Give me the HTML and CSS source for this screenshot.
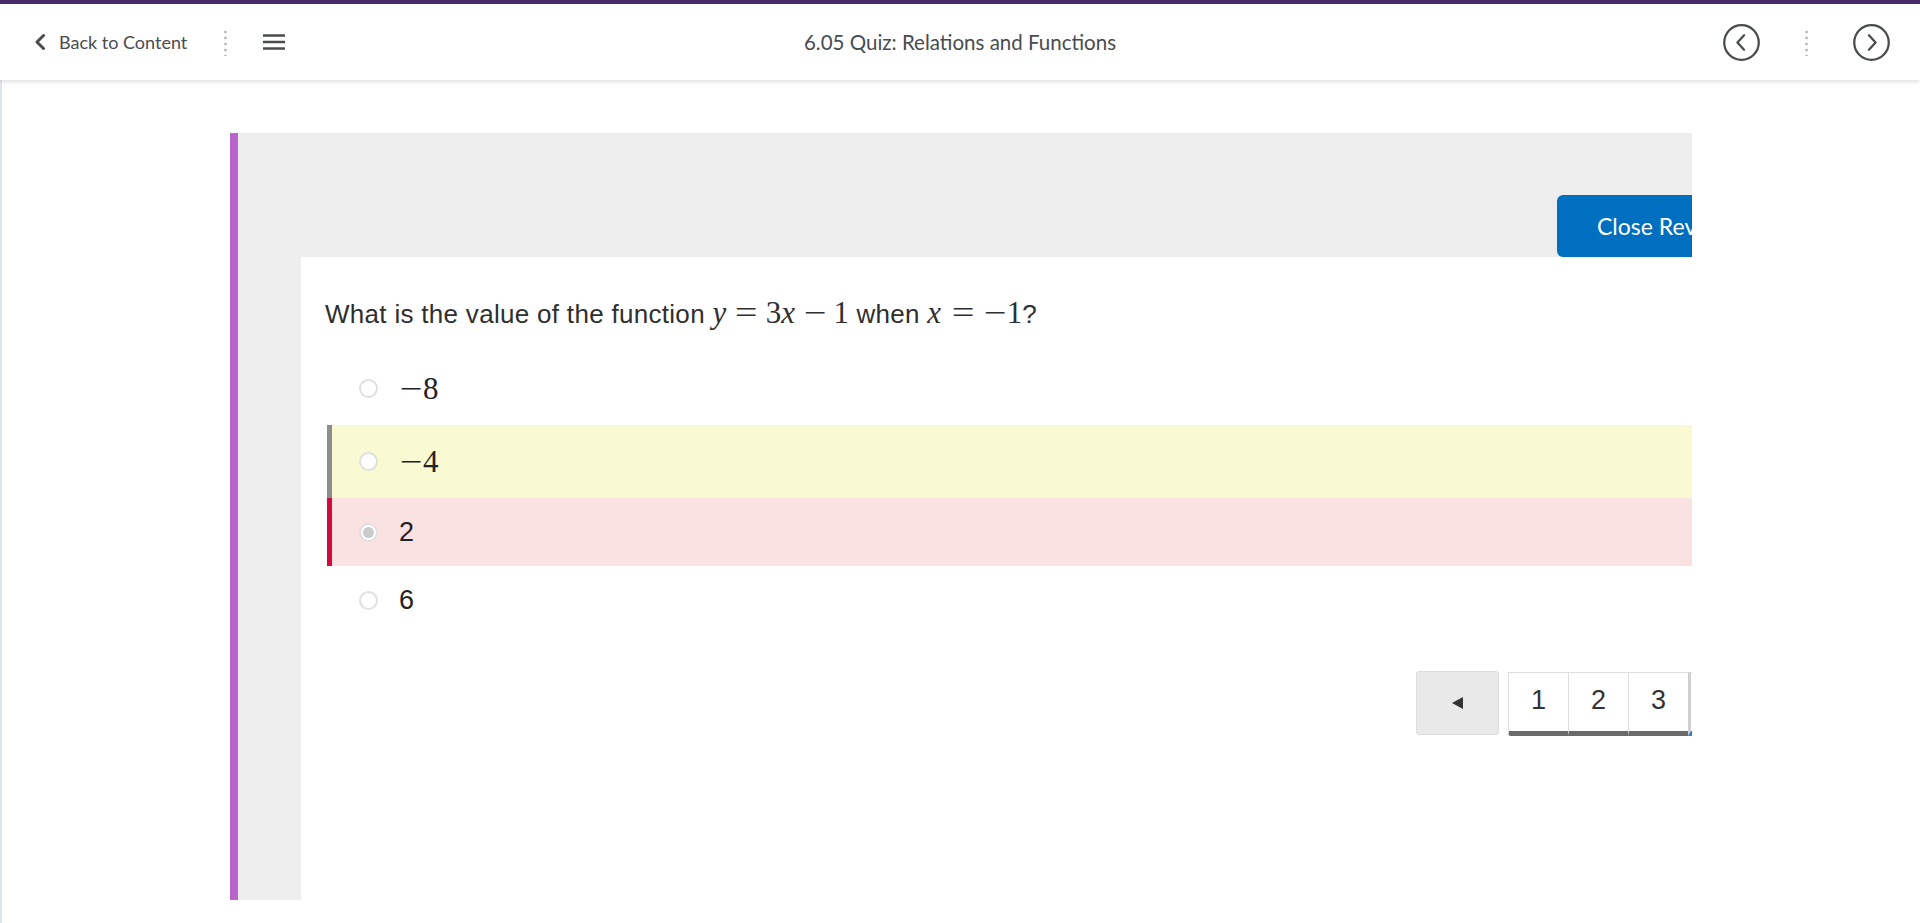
FILE: index.html
```html
<!DOCTYPE html>
<html lang="en">
<head>
<meta charset="utf-8">
<title>6.05 Quiz: Relations and Functions</title>
<link rel="stylesheet" href="styles.css">
</head>
<body>
<header class="topbar">
  <div class="nav-left">
    <a class="back-link" href="#">
      <svg class="back-chev" width="12" height="16" viewBox="0 0 12 16"><path d="M9.5 1.5 L3 8 L9.5 14.5" fill="none" stroke="#494c4e" stroke-width="3" stroke-linecap="round" stroke-linejoin="round"/></svg>
      <span>Back to Content</span>
    </a>
    <span class="vdots"></span>
    <button class="menu-btn" aria-label="Menu">
      <svg width="22" height="16" viewBox="0 0 22 16"><path d="M0 1.5 H22 M0 8 H22 M0 14.5 H22" stroke="#494c4e" stroke-width="2.4"/></svg>
    </button>
  </div>
  <h1 class="title">6.05 Quiz: Relations and Functions</h1>
  <div class="nav-right">
    <button class="circle-btn" aria-label="Previous">
      <svg width="37" height="37" viewBox="0 0 36 36"><circle cx="18" cy="18" r="16.8" fill="none" stroke="#494c4e" stroke-width="2.2"/><path d="M20.5 11 L14 18 L20.5 25" fill="none" stroke="#494c4e" stroke-width="2.2" stroke-linecap="round" stroke-linejoin="round"/></svg>
    </button>
    <span class="vdots"></span>
    <button class="circle-btn" aria-label="Next">
      <svg width="37" height="37" viewBox="0 0 36 36"><circle cx="18" cy="18" r="16.8" fill="none" stroke="#494c4e" stroke-width="2.2"/><path d="M15.5 11 L22 18 L15.5 25" fill="none" stroke="#494c4e" stroke-width="2.2" stroke-linecap="round" stroke-linejoin="round"/></svg>
    </button>
  </div>
</header>

<main class="stage">
  <section class="panel">
    <div class="panel-inner">
      <div class="panel-head">
        <button class="close-btn">Close Review</button>
      </div>
      <div class="card">
        <p class="question">What is the value of the function <span class="math"><span class="mi">y</span><span class="mo rel">=</span><span class="mn">3</span><span class="mi x">x</span><span class="mo bin">−</span><span class="mn">1</span></span> when <span class="math"><span class="mi x">x</span><span class="mo rel">=</span><span class="mo">−</span><span class="mn">1</span></span>?</p>
        <ul class="options">
          <li class="option">
            <span class="radio"></span>
            <span class="math opt-math"><span class="mo">−</span><span class="mn">8</span></span>
          </li>
          <li class="option option-correct">
            <span class="radio"></span>
            <span class="math opt-math"><span class="mo">−</span><span class="mn">4</span></span>
          </li>
          <li class="option option-wrong">
            <span class="radio radio-checked"></span>
            <span class="opt-text">2</span>
          </li>
          <li class="option">
            <span class="radio"></span>
            <span class="opt-text">6</span>
          </li>
        </ul>
        <nav class="pager">
          <button class="pager-prev" aria-label="Previous question"><span class="tri"></span></button>
          <div class="pages">
            <span class="page">1</span>
            <span class="page">2</span>
            <span class="page">3</span>
            <span class="page page-current">4</span>
            <span class="page">5</span>
          </div>
        </nav>
      </div>
    </div>
  </section>
</main>
</body>
</html>
```
FILE: styles.css
```css
* { box-sizing: border-box; }

html, body {
  margin: 0;
  padding: 0;
  background: #ffffff;
  overflow: hidden;
}

body {
  font-family: Lato, "Noto Sans", sans-serif;
  color: #494c4e;
}

/* ---------- top bar ---------- */
.topbar {
  height: 80px;
  border-top: 4px solid #472b6b;
  background: #fff;
  display: grid;
  grid-template-columns: 1fr auto 1fr;
  align-items: center;
  box-shadow: 0 2px 4px rgba(0, 0, 0, 0.12);
  position: relative;
  z-index: 2;
}

.nav-left {
  display: flex;
  align-items: center;
  padding-left: 34px;
}

.back-link {
  display: flex;
  align-items: center;
  gap: 13px;
  color: #494c4e;
  text-decoration: none;
  font-size: 18px;
}

.back-chev { display: block; }

.vdots {
  display: block;
  width: 3px;
  height: 27px;
  background: radial-gradient(circle, #c2c2c2 1.4px, transparent 1.6px) 0 0 / 3px 6px repeat-y;
}

.nav-left .vdots { margin: 0 36px 0 37px; }

.menu-btn,
.circle-btn {
  border: 0;
  background: none;
  padding: 0;
  display: flex;
  align-items: center;
}

.title {
  margin: 0;
  font-size: 20.5px;
  font-weight: 400;
  color: #494c4e;
}

.nav-right {
  display: flex;
  align-items: center;
  justify-content: flex-end;
  padding-right: 30px;
}

.nav-right .vdots { margin: 0 45px 0 45px; }

/* ---------- stage ---------- */
.stage {
  height: 843px;
  border-left: 2px solid #e0e5eb;
  padding-top: 53px;
}

.panel {
  margin-left: 228px;
  width: 1462px;
  height: 767px;
  border-left: 8px solid #b864cb;
  background: #ededed;
  overflow: hidden;
}

.panel-inner {
  width: 1800px;
  height: 100%;
  padding-left: 63px;
  display: flex;
  flex-direction: column;
}

.panel-head {
  padding-top: 62px;
  padding-left: 1256px;
  display: flex;
}

.close-btn {
  height: 62px;
  padding: 0 40px;
  border: 0;
  border-radius: 6px;
  background: #006fbf;
  color: #fff;
  font-family: Lato, "Noto Sans", sans-serif;
  font-size: 23px;
  white-space: nowrap;
}

.card {
  flex: 1;
  background: #fff;
  padding: 38px 0 0 24px;
  font-family: "Liberation Sans", Arial, sans-serif;
  color: #2f2f2f;
}

.question {
  margin: 0;
  font-size: 26px;
  letter-spacing: 0.3px;
  line-height: 36px;
}

/* ---------- math ---------- */
.math {
  font-family: "Liberation Serif", "Times New Roman", serif;
  font-size: 31px;
  letter-spacing: 0;
  white-space: nowrap;
}

.mi { font-style: italic; }
.mi.x { margin-right: 0.06em; }

.mo {
  display: inline-block;
  width: 0.778em;
  text-align: center;
  transform: scaleX(1.3);
}

.rel { margin: 0 0.25em; }
.bin { margin: 0 0.2em; }

/* ---------- options ---------- */
.options {
  list-style: none;
  margin: 20px 0 0 2px;
  padding: 0;
}

.option {
  display: flex;
  align-items: center;
  border-left: 5px solid transparent;
  padding: 20px 0 20px 27px;
  min-height: 68px;
  color: #222;
}

.option-correct {
  background: #fafad2;
  border-left-color: #8c8c8c;
}

.option-wrong {
  background: #fae2e2;
  border-left-color: #d30a3c;
}

.radio {
  width: 19px;
  height: 19px;
  border-radius: 50%;
  border: 2px solid #e0e0e0;
  background: #fff;
  margin-right: 21px;
  flex: none;
  display: flex;
  align-items: center;
  justify-content: center;
}

.radio-checked::after {
  content: "";
  width: 11px;
  height: 11px;
  border-radius: 50%;
  background: #cbcbcb;
}

.opt-math {
  display: inline-block;
  line-height: 33px;
  height: 33px;
}

.opt-text {
  font-size: 27px;
  line-height: 28px;
}

/* ---------- pager ---------- */
.pager {
  display: flex;
  align-items: flex-start;
  margin: 37px 0 0 1091px;
  gap: 9px;
}

.pager-prev {
  width: 83px;
  height: 64px;
  border: 1px solid #dcdcdc;
  border-radius: 3px;
  background: #e9e9e9;
  display: flex;
  align-items: center;
  justify-content: center;
  padding: 0;
}

.tri {
  width: 0;
  height: 0;
  border-top: 6px solid transparent;
  border-bottom: 6px solid transparent;
  border-right: 11px solid #333;
}

.pages {
  display: flex;
  margin-top: 1px;
}

.page {
  width: 60px;
  height: 64px;
  display: flex;
  align-items: center;
  justify-content: center;
  padding-bottom: 4px;
  font-family: "Liberation Sans", Arial, sans-serif;
  font-size: 27px;
  color: #333;
  background: #fff;
  border-top: 1px solid #dedede;
  border-left: 1px solid #dedede;
  border-bottom: 5px solid #6a6a6a;
}

.page:first-child {
  border-bottom-left-radius: 3px;
}

.page-current {
  border-left: 3px solid #d0d0d0;
  border-bottom-color: #2f7fd0;
}
```
